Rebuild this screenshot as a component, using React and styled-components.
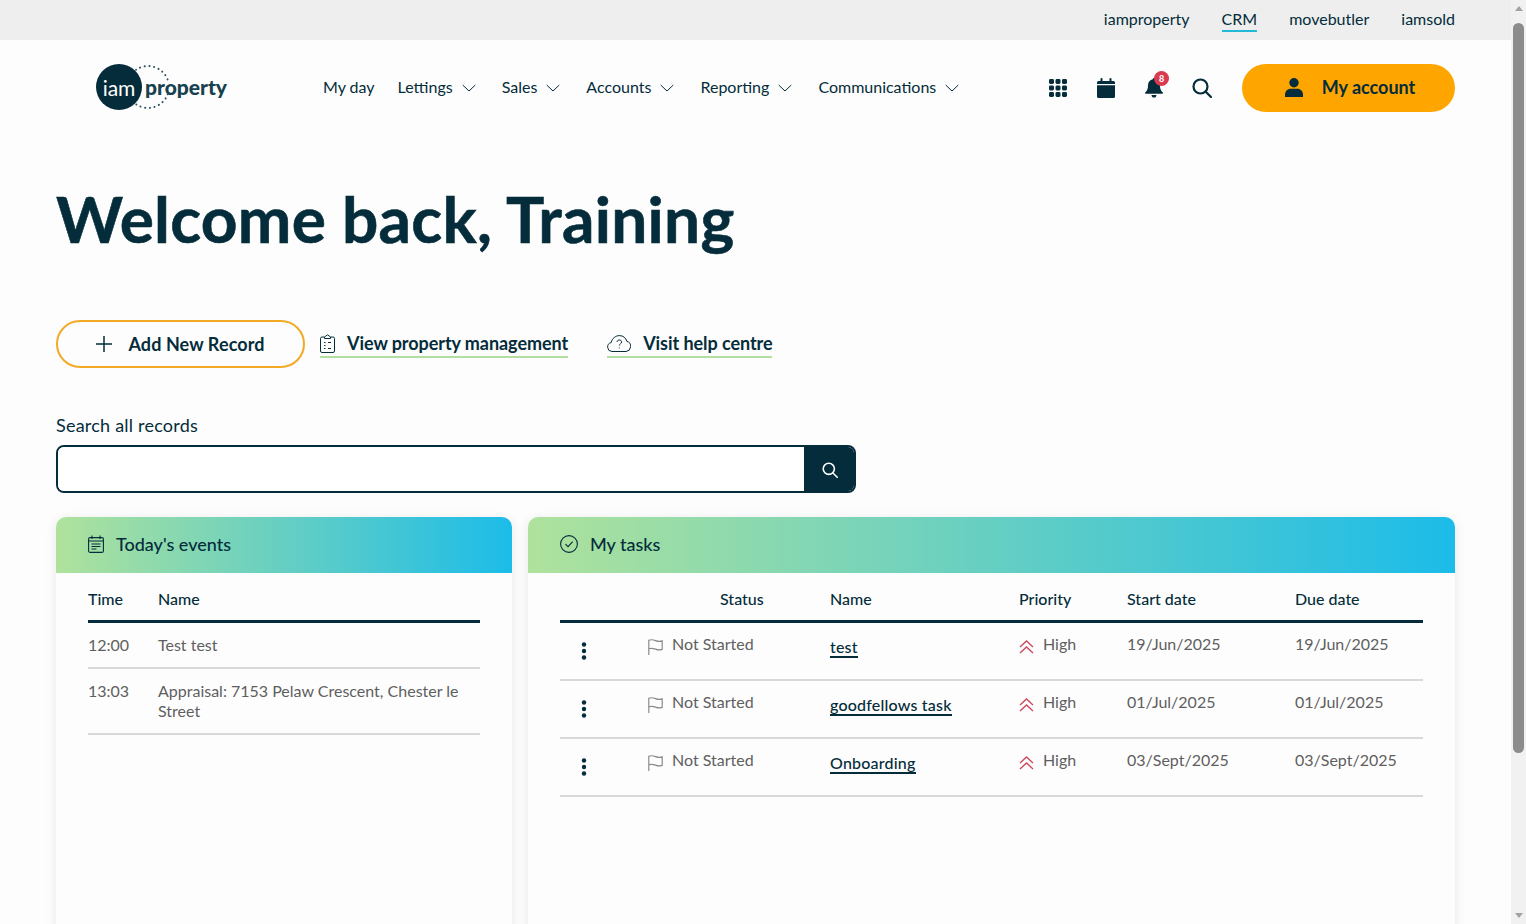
import React from 'react'
import styled, { createGlobalStyle } from 'styled-components'

const dark = '#042c3a'
const font = "Lato, 'Open Sans', sans-serif"

const GlobalStyle = createGlobalStyle`
  html, body {
    margin: 0;
    height: 100%;
    overflow: hidden;
    background: #fdfdfd;
  }
  body {
    font-family: ${font};
    color: ${dark};
  }
  * {
    box-sizing: border-box;
  }
`

const navItems = [
  { label: 'My day' },
  { label: 'Lettings', menu: true },
  { label: 'Sales', menu: true },
  { label: 'Accounts', menu: true },
  { label: 'Reporting', menu: true },
  { label: 'Communications', menu: true },
]

const events = [
  { time: '12:00', name: 'Test test' },
  { time: '13:03', name: 'Appraisal: 7153 Pelaw Crescent, Chester le Street' },
]

const tasks = [
  { name: 'test', start: '19/Jun/2025', due: '19/Jun/2025' },
  { name: 'goodfellows task', start: '01/Jul/2025', due: '01/Jul/2025' },
  { name: 'Onboarding', start: '03/Sept/2025', due: '03/Sept/2025' },
]

// * Icons
const Chevron = () => (
  <svg width="14" height="8" viewBox="0 0 14 8" fill="none" stroke={dark} strokeWidth="1">
    <path d="M.7 1l6.300 6 6.300-6" />
  </svg>
)

const GridIcon = () => (
  <svg width="18" height="18" viewBox="0 0 18 18" fill={dark}>
    {[0, 6.5, 13].map((y) =>
      [0, 6.5, 13].map((x) => <rect key={`${x}-${y}`} x={x} y={y} width="5" height="5" rx="1.4" />)
    )}
  </svg>
)

const CalendarIcon = () => (
  <svg width="18" height="20" viewBox="0 0 18 20" fill={dark}>
    <rect x="3.5" y="0" width="2" height="4" rx="1" />
    <rect x="12.5" y="0" width="2" height="4" rx="1" />
    <path d="M0 4.500A1.500 1.500 0 0 1 1.500 3h15A1.500 1.500 0 0 1 18 4.500V6H0zM0 7.200h18v11.300a1.500 1.500 0 0 1-1.500 1.500h-15A1.500 1.500 0 0 1 0 18.500z" />
  </svg>
)

const BellIcon = () => (
  <svg width="18" height="20" viewBox="0 0 18 20" fill={dark}>
    <path d="M9 0a1.200 1.200 0 0 1 1.200 1.300C13 1.900 15 4.300 15 7.200c0 3.800.8 5.200 2.600 7 .6.600.2 1.600-.6 1.600H1c-.8 0-1.200-1-.6-1.600 1.800-1.800 2.600-3.200 2.600-7 0-2.900 2-5.300 4.800-5.900A1.200 1.200 0 0 1 9 0z" />
    <path d="M6.500 17h5c0 1.600-1.100 2.600-2.500 2.600S6.500 18.600 6.500 17z" />
  </svg>
)

const SearchIcon = ({ size = 20, color = dark, width = 2.2 }) => (
  <svg width={size} height={size} viewBox="0 0 20 20" fill="none" stroke={color} strokeWidth={width} strokeLinecap="round">
    <circle cx="8.500" cy="8.500" r="7" />
    <path d="M13.700 13.700L19 19" />
  </svg>
)

const UserIcon = () => (
  <svg width="18" height="19" viewBox="0 0 18 19" fill={dark}>
    <circle cx="9" cy="4.700" r="4.700" />
    <path d="M0 16.500C0 13 2.800 10.700 5.500 10.700h7c2.700 0 5.500 2.300 5.500 5.800V19H0z" />
  </svg>
)

const PlusIcon = () => (
  <svg width="16" height="16" viewBox="0 0 16 16" stroke={dark} strokeWidth="1.500">
    <path d="M8 0v16M0 8h16" />
  </svg>
)

const ClipboardIcon = () => (
  <svg width="15" height="19" viewBox="0 0 15 19" fill="none" stroke={dark} strokeWidth="1">
    <path d="M4.500 3H2a1.500 1.500 0 0 0-1.500 1.500v12.500A1.500 1.500 0 0 0 2 18.500h11a1.500 1.500 0 0 0 1.500-1.500V4.500A1.500 1.500 0 0 0 13 3h-2.500" />
    <path d="M4.500 4.500V3L7.500 .8 10.500 3v1.500z" />
    <path d="M4 8.500h1.500M4 11.500h1.500M4 14.500h1.500M8 8.500h3M8 14.500h3" />
  </svg>
)

const CloudIcon = () => (
  <svg width="24" height="17" viewBox="0 0 24 17" fill="none" stroke={dark} strokeWidth="1">
    <path d="M6 16.500H5a4.500 4.500 0 0 1-.8-8.900C5 3.500 8.500 .6 12.500 .6c3.600 0 6.500 2.300 7.300 5.700a5.200 5.200 0 0 1-.8 10.200z" />
    <path d="M10 7c.2-1.300 1.100-2 2.300-2 1.300 0 2.300.8 2.300 2 0 1.800-2.300 1.800-2.300 3.500" />
    <path d="M12.300 12.500v.8" />
  </svg>
)

const EventsIcon = () => (
  <svg width="16" height="18" viewBox="0 0 16 18" fill="none" stroke={dark} strokeWidth="1.100">
    <rect x=".6" y="2.600" width="14.800" height="14.800" rx="1.500" />
    <path d="M.6 6h14.800M4 .5v3.500M12 .5v3.500M3.500 9h9M3.500 11.500h9M3.500 14h5" />
  </svg>
)

const CheckCircleIcon = () => (
  <svg width="18" height="18" viewBox="0 0 18 18" fill="none" stroke={dark} strokeWidth="1.100">
    <circle cx="9" cy="9" r="8.400" />
    <path d="M5.500 9.200l2.500 2.500 4.700-5" />
  </svg>
)

const FlagIcon = () => (
  <svg width="15" height="16" viewBox="0 0 15 16" fill="none" stroke="#8a8a8a" strokeWidth="1.200">
    <path d="M.8 16V1.200C3 .4 5 .6 7.500 1.600s4.500 1.100 6.700.3v8.500c-2.200.8-4.200.7-6.700-.3S3 9 .8 9.800" />
  </svg>
)

const PriorityIcon = () => (
  <svg width="15" height="14" viewBox="0 0 15 14" fill="none" stroke="#cf4a5b" strokeWidth="1.400">
    <path d="M1 7l6.500-6L14 7M1 13l6.500-6 6.500 6" />
  </svg>
)

const KebabIcon = () => (
  <svg width="6" height="18" viewBox="0 0 6 18" fill={dark}>
    <circle cx="3" cy="2.500" r="2.200" />
    <circle cx="3" cy="9" r="2.200" />
    <circle cx="3" cy="15.500" r="2.200" />
  </svg>
)

const LogoRing = () => (
  <svg width="42" height="46" viewBox="0 0 42 46" fill="none" stroke="#33535f" strokeWidth="2" strokeDasharray="0.1 4.600" strokeLinecap="round">
    <path d="M6 5.800A21 21 0 0 1 37.700 15.800M37.700 30.200A21 21 0 0 1 6 40.200" />
  </svg>
)

const App = () => {
  return (
    <>
      <GlobalStyle />
      <PageStyled>
        <MainStyled>
          <BrandBarStyled>
            <BrandLinkStyled>iamproperty</BrandLinkStyled>
            <BrandLinkStyled $active>CRM</BrandLinkStyled>
            <BrandLinkStyled>movebutler</BrandLinkStyled>
            <BrandLinkStyled>iamsold</BrandLinkStyled>
          </BrandBarStyled>

          <NavBarStyled>
            <LogoStyled>
              <LogoCircleStyled>iam</LogoCircleStyled>
              <LogoRingStyled>
                <LogoRing />
              </LogoRingStyled>
              <LogoTextStyled>property</LogoTextStyled>
            </LogoStyled>
            <NavLinksStyled>
              {navItems.map((item) => (
                <NavLinkStyled key={item.label}>
                  {item.label}
                  {item.menu && <Chevron />}
                </NavLinkStyled>
              ))}
            </NavLinksStyled>
            <NavIconsStyled>
              <NavIconStyled>
                <GridIcon />
              </NavIconStyled>
              <NavIconStyled>
                <CalendarIcon />
              </NavIconStyled>
              <NavIconStyled>
                <BellIcon />
                <BadgeStyled>8</BadgeStyled>
              </NavIconStyled>
              <NavIconStyled>
                <SearchIcon />
              </NavIconStyled>
            </NavIconsStyled>
            <AccountButtonStyled>
              <UserIcon />
              My account
            </AccountButtonStyled>
          </NavBarStyled>

          <ContentStyled>
            <TitleStyled>Welcome back, Training</TitleStyled>

            <ActionsStyled>
              <AddButtonStyled>
                <PlusIcon />
                Add New Record
              </AddButtonStyled>
              <ActionLinkStyled>
                <ClipboardIcon />
                View property management
              </ActionLinkStyled>
              <ActionLinkStyled>
                <CloudIcon />
                Visit help centre
              </ActionLinkStyled>
            </ActionsStyled>

            <SearchLabelStyled>Search all records</SearchLabelStyled>
            <SearchStyled>
              <SearchInputStyled />
              <SearchButtonStyled>
                <SearchIcon size={16} color="#fff" width={2} />
              </SearchButtonStyled>
            </SearchStyled>

            <PanelsStyled>
              <PanelStyled>
                <PanelHeaderStyled>
                  <EventsIcon />
                  Today's events
                </PanelHeaderStyled>
                <PanelBodyStyled>
                  <EventsHeadStyled>
                    <span>Time</span>
                    <span>Name</span>
                  </EventsHeadStyled>
                  {events.map((event) => (
                    <EventRowStyled key={event.time}>
                      <span>{event.time}</span>
                      <span>{event.name}</span>
                    </EventRowStyled>
                  ))}
                </PanelBodyStyled>
              </PanelStyled>

              <PanelStyled>
                <PanelHeaderStyled>
                  <CheckCircleIcon />
                  My tasks
                </PanelHeaderStyled>
                <PanelBodyStyled>
                  <TasksHeadStyled>
                    <span />
                    <StatusHeadStyled>Status</StatusHeadStyled>
                    <span>Name</span>
                    <span>Priority</span>
                    <span>Start date</span>
                    <span>Due date</span>
                  </TasksHeadStyled>
                  {tasks.map((task) => (
                    <TaskRowStyled key={task.name}>
                      <KebabCellStyled>
                        <KebabIcon />
                      </KebabCellStyled>
                      <StatusCellStyled>
                        <FlagIcon />
                        Not Started
                      </StatusCellStyled>
                      <TaskLinkStyled>
                        <span>{task.name}</span>
                      </TaskLinkStyled>
                      <PriorityCellStyled>
                        <PriorityIcon />
                        High
                      </PriorityCellStyled>
                      <span>{task.start}</span>
                      <span>{task.due}</span>
                    </TaskRowStyled>
                  ))}
                </PanelBodyStyled>
              </PanelStyled>
            </PanelsStyled>
          </ContentStyled>
        </MainStyled>

        <ScrollbarStyled>
          <ArrowStyled />
          <ThumbStyled />
          <ArrowStyled $down />
        </ScrollbarStyled>
      </PageStyled>
    </>
  )
}

const PageStyled = styled.div`
  display: flex;
  height: 924px;
  overflow: hidden;
`

const MainStyled = styled.div`
  width: 1511px;
  flex: none;
`

const BrandBarStyled = styled.div`
  height: 40px;
  background: #eeeeee;
  display: flex;
  justify-content: flex-end;
  align-items: center;
  gap: 32px;
  padding: 0 56px 2px 0;
  font-size: 16px;
`

const BrandLinkStyled = styled.a`
  line-height: 24px;
  height: 25px;
  border-bottom: 2px solid ${(p) => (p.$active ? '#22b8d8' : 'transparent')};
`

const NavBarStyled = styled.div`
  height: 96px;
  display: flex;
  align-items: center;
  padding: 0 56px 0 96px;
`

const LogoStyled = styled.div`
  position: relative;
  display: flex;
  align-items: center;
  width: 227px;
  height: 46px;
  margin-top: -2px;
`

const LogoCircleStyled = styled.div`
  width: 46px;
  height: 46px;
  border-radius: 50%;
  background: ${dark};
  color: #fff;
  font-size: 21px;
  display: flex;
  align-items: center;
  justify-content: center;
`

const LogoRingStyled = styled.div`
  position: absolute;
  left: 34px;
  top: 0;
  height: 46px;
`

const LogoTextStyled = styled.div`
  font-size: 21px;
  font-weight: 900;
  margin-left: 3px;
  margin-top: -1px;
  color: #17414f;
`

const NavLinksStyled = styled.nav`
  display: flex;
  gap: 23px;
  font-size: 16px;
  margin-top: -3px;
`

const NavLinkStyled = styled.a`
  display: flex;
  align-items: center;
  gap: 9px;
  svg {
    margin: 2px 3px 0 0;
  }
`

const NavIconsStyled = styled.div`
  display: flex;
  gap: 24px;
  margin-left: auto;
  margin-right: 28px;
`

const NavIconStyled = styled.div`
  position: relative;
  width: 24px;
  height: 24px;
  display: flex;
  align-items: center;
  justify-content: center;
`

const BadgeStyled = styled.span`
  position: absolute;
  top: -5px;
  right: -3px;
  width: 15px;
  height: 15px;
  border-radius: 50%;
  background: #d83a4e;
  color: #fff;
  font-size: 9px;
  font-weight: 700;
  display: flex;
  align-items: center;
  justify-content: center;
`

const AccountButtonStyled = styled.a`
  width: 213px;
  height: 48px;
  border-radius: 24px;
  background: #ffa500;
  display: flex;
  align-items: center;
  justify-content: center;
  gap: 19px;
  padding: 0 0 2px 3px;
  font-size: 18px;
  font-weight: 700;
`

const ContentStyled = styled.div`
  padding: 0 56px;
`

const TitleStyled = styled.h1`
  margin: 45px 0 0;
  font-size: 64px;
  line-height: 76px;
  font-weight: 700;
  letter-spacing: 0.27px;
  -webkit-text-stroke: 0.6px ${dark};
`

const ActionsStyled = styled.div`
  display: flex;
  align-items: center;
  margin-top: 63px;
`

const AddButtonStyled = styled.a`
  width: 249px;
  height: 48px;
  border: 2px solid #f2aa24;
  border-radius: 24px;
  display: flex;
  align-items: center;
  justify-content: center;
  gap: 16px;
  font-size: 18px;
  font-weight: 700;
  letter-spacing: 0.1px;
  margin-right: 15px;
`

const ActionLinkStyled = styled.a`
  display: flex;
  align-items: center;
  gap: 12px;
  height: 28px;
  font-size: 18px;
  font-weight: 700;
  letter-spacing: -0.06px;
  border-bottom: 2px solid #b2dfa0;
  margin-right: 39px;
`

const SearchLabelStyled = styled.div`
  margin-top: 45px;
  font-size: 18px;
  line-height: 24px;
  letter-spacing: 0.22px;
`

const SearchStyled = styled.div`
  display: flex;
  width: 800px;
  height: 48px;
  margin-top: 8px;
  border: 2px solid ${dark};
  border-radius: 8px;
  overflow: hidden;
`

const SearchInputStyled = styled.div`
  flex: 1;
  background: #fff;
`

const SearchButtonStyled = styled.div`
  width: 50px;
  background: ${dark};
  display: flex;
  align-items: center;
  justify-content: center;
  padding: 2px 0 0 1px;
`

const PanelsStyled = styled.div`
  display: grid;
  grid-template-columns: 456px 927px;
  gap: 16px;
  margin-top: 24px;
`

const PanelStyled = styled.section`
  height: 420px;
  background: #fdfdfd;
  border-radius: 10px 10px 0 0;
  box-shadow: 0 2px 12px rgba(0, 0, 0, 0.09);
  overflow: hidden;
`

const PanelHeaderStyled = styled.div`
  height: 56px;
  display: flex;
  align-items: center;
  gap: 12px;
  padding: 0 0 2px 32px;
  background: linear-gradient(90deg, #afe29c, #1cbce9);
  font-size: 18px;
  font-weight: 500;
`

const PanelBodyStyled = styled.div`
  padding: 0 32px;
  font-size: 16px;
`

const EventsHeadStyled = styled.div`
  display: grid;
  grid-template-columns: 70px 1fr;
  height: 50px;
  padding-top: 4px;
  align-items: center;
  font-weight: 500;
  border-bottom: 3px solid ${dark};
`

const EventRowStyled = styled.div`
  display: grid;
  grid-template-columns: 70px 1fr;
  padding: 12px 0;
  line-height: 20px;
  color: #5f5f5f;
  border-bottom: 2px solid #d8d8d8;
`

const tasksColumns = '72px 198px 189px 108px 168px 128px'

const TasksHeadStyled = styled.div`
  display: grid;
  grid-template-columns: ${tasksColumns};
  height: 50px;
  padding-top: 4px;
  align-items: center;
  font-weight: 500;
  border-bottom: 3px solid ${dark};
`

const StatusHeadStyled = styled.span`
  padding-left: 88px;
`

const TaskRowStyled = styled.div`
  display: grid;
  grid-template-columns: ${tasksColumns};
  height: 58px;
  padding-top: 10px;
  line-height: 22px;
  color: #5f5f5f;
  border-bottom: 2px solid #d8d8d8;
`

const KebabCellStyled = styled.div`
  padding: 9px 0 0 21px;
`

const StatusCellStyled = styled.div`
  display: flex;
  gap: 9px;
  padding-left: 16px;
  svg {
    margin-top: 6px;
  }
`

const TaskLinkStyled = styled.div`
  padding-top: 3px;
  color: ${dark};
  font-weight: 500;
  letter-spacing: 0.2px;
  span {
    border-bottom: 2px solid ${dark};
  }
`

const PriorityCellStyled = styled.div`
  display: flex;
  gap: 9px;
  svg {
    margin-top: 7px;
  }
`

const ScrollbarStyled = styled.div`
  width: 15px;
  flex: none;
  background: #f1f1f1;
  display: flex;
  flex-direction: column;
  align-items: center;
`

const ArrowStyled = styled.div`
  width: 0;
  height: 0;
  margin: 6px 0;
  border-left: 4px solid transparent;
  border-right: 4px solid transparent;
  ${(p) => (p.$down ? 'border-top: 5px solid #a3a3a3; margin-top: auto;' : 'border-bottom: 5px solid #a3a3a3;')}
`

const ThumbStyled = styled.div`
  width: 11px;
  height: 730px;
  margin-top: 6px;
  border-radius: 6px;
  background: #8c8c8c;
`

export default App
